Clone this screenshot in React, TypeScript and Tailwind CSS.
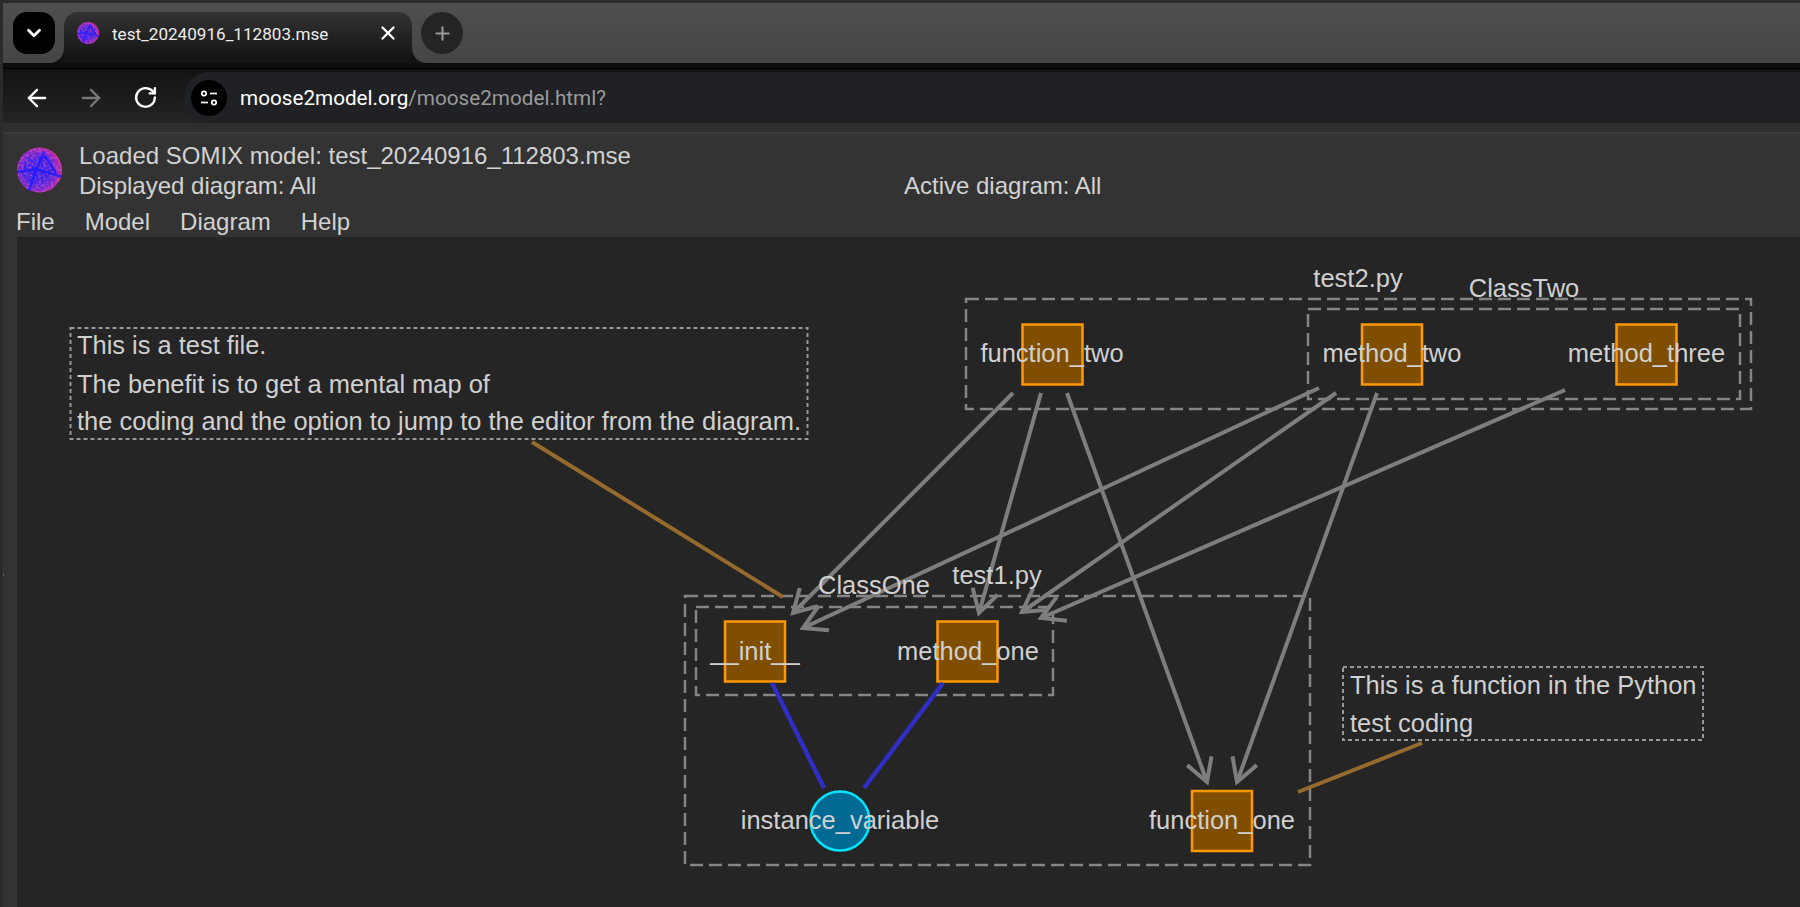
import { ArrowLeft, ArrowRight, ChevronDown, Plus, RotateCw, X } from "lucide-react";

// page coordinates are used directly, the svg viewBox starts where the canvas starts
const boxes = [
  { x: 966, y: 299, w: 785, h: 110 },
  { x: 1308, y: 309, w: 432, h: 90 },
  { x: 685, y: 596, w: 625, h: 269 },
  { x: 696, y: 607, w: 357, h: 88 },
];

const squares = [
  { x: 1022.5, y: 324.5, size: 60 },
  { x: 1362, y: 324.5, size: 60 },
  { x: 1616.5, y: 324.5, size: 60 },
  { x: 725, y: 621.5, size: 60 },
  { x: 937.5, y: 621.5, size: 60 },
  { x: 1192, y: 791, size: 60 },
];

const labels = [
  { text: "function_two", x: 1052, y: 362 },
  { text: "method_two", x: 1392, y: 362 },
  { text: "method_three", x: 1646.5, y: 362 },
  { text: "__init__", x: 755, y: 659.5 },
  { text: "method_one", x: 968, y: 659.5 },
  { text: "instance_variable", x: 840, y: 828.5 },
  { text: "function_one", x: 1222, y: 828.5 },
  { text: "test2.py", x: 1358, y: 287 },
  { text: "ClassTwo", x: 1524, y: 297 },
  { text: "test1.py", x: 997, y: 583.5 },
  { text: "ClassOne", x: 874, y: 593.5 },
];

const arrows = [
  [1013, 393, 793, 613],
  [1041, 393, 979, 613],
  [1067, 393, 1207, 782],
  [1319, 388, 803, 628],
  [1336, 393, 1022, 612],
  [1377, 393, 1237, 782],
  [1565, 390, 1041, 618],
];

const commentLines = [
  [532, 442, 783, 597],
  [1422, 743, 1298, 792],
];

const accessLines = [
  [772, 683, 824, 788],
  [943, 683, 864, 788],
];

function barb(x1: number, y1: number, x2: number, y2: number, turn: number) {
  const angle = Math.atan2(y1 - y2, x1 - x2) + turn;
  return `${x2 + 26 * Math.cos(angle)},${y2 + 26 * Math.sin(angle)}`;
}

function ModelLogo({ id, className }: { id: string; className: string }) {
  return (
    <svg viewBox="0 0 46 46" className={className}>
      <defs>
        <radialGradient id={id} cx="45%" cy="52%" r="55%">
          <stop offset="0%" stopColor="#2a20f4" />
          <stop offset="55%" stopColor="#4424e4" />
          <stop offset="82%" stopColor="#8a28c4" />
          <stop offset="100%" stopColor="#cc2a96" />
        </radialGradient>
        <filter id={`${id}-noise`} x="0" y="0" width="100%" height="100%">
          <feTurbulence type="fractalNoise" baseFrequency="0.4" numOctaves="2" seed="4" />
          <feColorMatrix values="0 0 0 0 0.85  0 0 0 0 0.12  0 0 0 0 0.55  1.5 0 0 0 -0.6" />
          <feComposite in2="SourceGraphic" operator="in" />
        </filter>
      </defs>
      <circle cx="23" cy="23" r="23" fill={`url(#${id})`} />
      <circle cx="23" cy="23" r="23" filter={`url(#${id}-noise)`} />
      <path d="M0 25 L20 22 L46 30 M20 22 L28 4 M20 22 L12 44 M28 8 L40 26" stroke="#1a1aff" strokeWidth="2.5" fill="none" opacity="0.85" />
    </svg>
  );
}

function SiteInfoIcon() {
  return (
    <svg viewBox="0 0 20 20" className="h-5 w-5" fill="none" stroke="white" strokeWidth="1.7">
      <circle cx="5" cy="5.5" r="2.2" />
      <path d="M11 5.5h7" />
      <path d="M2 14.5h7" />
      <circle cx="15" cy="14.5" r="2.2" />
    </svg>
  );
}

function Diagram() {
  return (
    <svg viewBox="17 237 1783 670" className="h-[670px] w-[1783px]">
      {squares.map((s) => (
        <rect key={s.x} x={s.x} y={s.y} width={s.size} height={s.size} className="fill-[#7f4e00] stroke-[#ff9800] stroke-[2.5]" />
      ))}
      <circle cx="840" cy="821" r="29.5" className="fill-[#006a94] stroke-[#00e5ff] stroke-[2.5]" />
      {boxes.map((b) => (
        <rect key={b.x} x={b.x} y={b.y} width={b.w} height={b.h} fill="none" strokeDasharray="13 6" className="stroke-[#858585] stroke-[2.5]" />
      ))}
      <rect x="70.5" y="328" width="737" height="111" fill="none" strokeDasharray="4 3" className="stroke-[#989898] stroke-2" />
      <rect x="1343" y="667" width="360" height="73" fill="none" strokeDasharray="4 3" className="stroke-[#989898] stroke-2" />
      {commentLines.map(([x1, y1, x2, y2]) => (
        <line key={x1} x1={x1} y1={y1} x2={x2} y2={y2} className="stroke-[#96692c] stroke-4" />
      ))}
      {accessLines.map(([x1, y1, x2, y2]) => (
        <line key={x1} x1={x1} y1={y1} x2={x2} y2={y2} className="stroke-[#2f2fc4] stroke-[4.5]" />
      ))}
      {arrows.map(([x1, y1, x2, y2]) => (
        <g key={x1} fill="none" className="stroke-[#7e7e7e] stroke-4">
          <line x1={x1} y1={y1} x2={x2} y2={y2} />
          <polyline points={`${barb(x1, y1, x2, y2, 0.52)} ${x2},${y2} ${barb(x1, y1, x2, y2, -0.52)}`} />
        </g>
      ))}
      {labels.map((l) => (
        <text key={l.text} x={l.x} y={l.y} textAnchor="middle" className="fill-[#d0d0d0] text-[25.5px]">
          {l.text}
        </text>
      ))}
      <g className="fill-[#d0d0d0] text-[25.45px]">
        <text x="77" y="354">This is a test file.</text>
        <text x="77" y="393">The benefit is to get a mental map of</text>
        <text x="77" y="430">the coding and the option to jump to the editor from the diagram.</text>
        <text x="1350" y="694">This is a function in the Python</text>
        <text x="1350" y="732">test coding</text>
      </g>
    </svg>
  );
}

export default function App() {
  return (
    <div className="relative flex h-[907px] w-[1800px] flex-col overflow-hidden border-l-[3px] border-t-[3px] border-[#2b2b2b] bg-[#333333] font-['Liberation_Sans',sans-serif] text-[#d2d2d2]">
      <div className="absolute -left-[3px] top-[570px] h-[3px] w-1 bg-[#5a5a5a]" />

      <div className="flex h-[60px] shrink-0 items-start bg-gradient-to-b from-[#4f4f4f] to-[#454545] pl-[10px] pt-[9px]">
        <div className="flex h-[42px] w-[42px] items-center justify-center rounded-[14px] bg-black text-white">
          <ChevronDown size={22} strokeWidth={3} />
        </div>
        <div className="relative ml-[9px] h-[51px] w-[348px] rounded-t-[14px] bg-gradient-to-b from-[#333333] to-[#121212]">
          <div className="absolute bottom-0 -left-[14px] h-[14px] w-[14px] bg-[radial-gradient(circle_at_0_0,transparent_13.5px,#121212_14px)]" />
          <div className="absolute bottom-0 -right-[14px] h-[14px] w-[14px] bg-[radial-gradient(circle_at_100%_0,transparent_13.5px,#121212_14px)]" />
          <div className="flex h-[42px] items-center pl-[13px] pr-[13px]">
            <ModelLogo id="tab-logo" className="h-[22px] w-[22px]" />
            <span className="ml-[13px] mt-[3px] font-['Roboto',sans-serif] text-[17.1px] text-[#ececec]">test_20240916_112803.mse</span>
            <X size={22} strokeWidth={2.5} className="ml-auto text-white" />
          </div>
        </div>
        <div className="ml-[9px] flex h-[42px] w-[42px] items-center justify-center rounded-full bg-[#242424] text-[#9a9a9a]">
          <Plus size={21} strokeWidth={2.4} />
        </div>
      </div>

      <div className="h-[9px] shrink-0 border-b-[3px] border-t-[5px] border-b-[#111111] border-t-[#0d0d0d] bg-black" />

      <div className="flex h-[51px] shrink-0 items-center bg-gradient-to-b from-[#141414] to-[#242424] pl-[7px]">
        <div className="flex w-[54px] justify-center text-white">
          <ArrowLeft size={28} strokeWidth={2} />
        </div>
        <div className="flex w-[54px] justify-center text-[#777777]">
          <ArrowRight size={28} strokeWidth={2} />
        </div>
        <div className="flex w-[54px] justify-center text-white">
          <RotateCw size={25} strokeWidth={2.3} />
        </div>
        <div className="ml-[12px] flex h-[51px] flex-1 items-center rounded-l-full bg-[#202125] pl-[7px]">
          <div className="flex h-9 w-9 items-center justify-center rounded-full bg-black">
            <SiteInfoIcon />
          </div>
          <span className="ml-[13px] mt-[2px] font-['Roboto',sans-serif] text-[20.7px] text-white">moose2model.org</span>
          <span className="mt-[2px] font-['Roboto',sans-serif] text-[20.7px] text-[#9a9a9a]">/moose2model.html?</span>
        </div>
      </div>

      <div className="h-[11px] shrink-0 border-b-2 border-[#3a3a3a] bg-[#2e2e2e]" />

      <div className="flex shrink-0 flex-col pl-[14px] pt-[7px] text-[24px] leading-[30px]">
        <div className="flex">
          <ModelLogo id="header-logo" className="mt-[6px] h-[46px] w-[45px]" />
          <div className="ml-[17px]">
            <div>Loaded SOMIX model: test_20240916_112803.mse</div>
            <div className="flex">
              <div className="w-[825px]">Displayed diagram: All</div>
              <div>Active diagram: All</div>
            </div>
          </div>
        </div>
        <div className="-ml-px mt-[6px] flex gap-[30px]">
          <span>File</span>
          <span>Model</span>
          <span>Diagram</span>
          <span>Help</span>
        </div>
      </div>

      <div className="ml-[14px] flex-1 bg-[#252525]">
        <Diagram />
      </div>
    </div>
  );
}
